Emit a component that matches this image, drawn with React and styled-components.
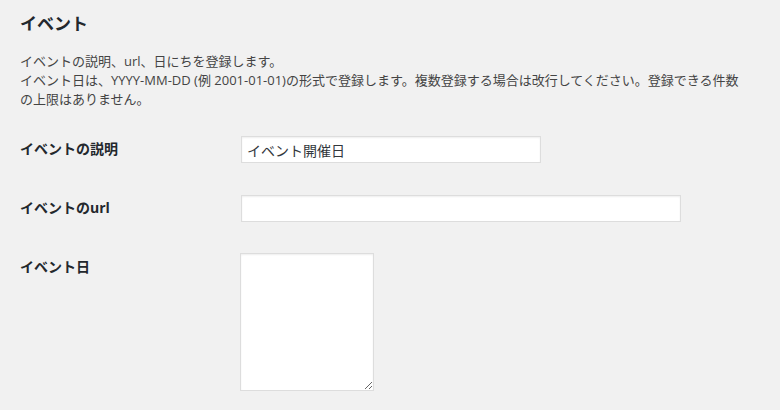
import React from "react";
import styled, { createGlobalStyle } from "styled-components";

const GlobalStyle = createGlobalStyle`
  html, body {
    margin: 0;
    padding: 0;
    background: #f1f1f1;
  }
  body {
    font-family: "Open Sans", "Noto Sans CJK JP", sans-serif;
    color: #444;
    font-size: 13px;
  }
`;

const Wrap = styled.div`
  padding: 0 20px;
  width: 780px;
  min-height: 410px;
  box-sizing: border-box;
`;

const Title = styled.h2`
  margin: 0;
  padding: 12px 0 0;
  font-size: 17px;
  line-height: 23px;
  font-weight: 700;
  color: #23282d;
`;

const Description = styled.p`
  margin: 17px 0 0;
  max-width: 725px;
  font-size: 13px;
  line-height: 19px;
  color: #444;
`;

const Form = styled.div`
  margin-top: 11px;
  display: flex;
  flex-direction: column;
`;

const Row = styled.div`
  display: grid;
  grid-template-columns: 210px 1fr;
`;

const Label = styled.label`
  padding: 20px 10px 20px 0;
  font-size: 14px;
  line-height: 18px;
  font-weight: 700;
  color: #23282d;
`;

const Field = styled.div`
  padding: 15px 10px;
`;

const TextInput = styled.input`
  display: block;
  margin: 1px;
  box-sizing: border-box;
  width: ${p => p.$width}px;
  height: 27px;
  padding: 3px 5px;
  border: 1px solid #ddd;
  border-radius: 0;
  background: #fff;
  box-shadow: inset 0 1px 2px rgba(0, 0, 0, 0.07);
  font-family: "Open Sans", "Noto Sans CJK JP", sans-serif;
  font-size: 14px;
  color: #32373c;
  outline: none;
`;

const TextArea = styled.textarea`
  display: block;
  margin: 0;
  box-sizing: border-box;
  width: 134px;
  height: 138px;
  padding: 2px 6px;
  border: 1px solid #ddd;
  border-radius: 0;
  background: #fff;
  box-shadow: inset 0 1px 2px rgba(0, 0, 0, 0.07);
  font-family: "Open Sans", "Noto Sans CJK JP", sans-serif;
  font-size: 14px;
  color: #32373c;
  outline: none;
`;

export default function App() {
  return (
    <Wrap>
      <GlobalStyle />
      <Title>イベント</Title>
      <Description>
        イベントの説明、url、日にちを登録します。
        <br />
        イベント日は、YYYY-MM-DD (例 2001-01-01)の形式で登録します。複数登録する場合は改行してください。登録できる件数の上限はありません。
      </Description>
      <Form>
        <Row>
          <Label>イベントの説明</Label>
          <Field>
            <TextInput $width={300} defaultValue="イベント開催日" />
          </Field>
        </Row>
        <Row>
          <Label>イベントのurl</Label>
          <Field>
            <TextInput $width={440} defaultValue="" />
          </Field>
        </Row>
        <Row>
          <Label>イベント日</Label>
          <Field>
            <TextArea defaultValue="" />
          </Field>
        </Row>
      </Form>
    </Wrap>
  );
}
